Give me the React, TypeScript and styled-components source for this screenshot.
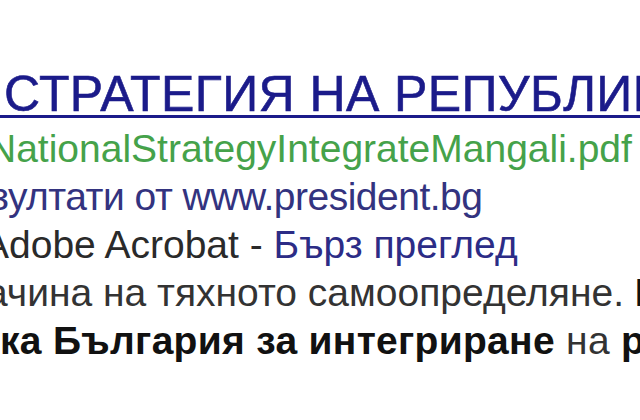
import styled, { createGlobalStyle } from "styled-components";

const GlobalStyle = createGlobalStyle`
    html, body {
        margin: 0;
        padding: 0;
        background: #ffffff;
    }
    body {
        width: 640px;
        height: 420px;
        overflow: hidden;
    }
`;

const Result = styled.div`
    width: 640px;
    height: 420px;
    overflow: hidden;
    padding-top: 67px;
    box-sizing: border-box;
    font-family: "Liberation Sans", Arial, sans-serif;
    white-space: nowrap;
`;

const Title = styled.a<{ $shift: number }>`
    display: block;
    margin-left: ${(p) => p.$shift}px;
    margin-bottom: 4px;
    font-size: 50px;
    line-height: 54px;
    letter-spacing: 0.4px;
    color: #1b1b8a;
    -webkit-text-stroke: 0.6px #1b1b8a;
    text-decoration: underline;
    text-decoration-thickness: 3px;
    text-underline-offset: 4px;
`;

const Line = styled.div<{ $shift: number; $color?: string; $spacing?: number }>`
    margin-left: ${(p) => p.$shift}px;
    font-size: 39px;
    line-height: 48px;
    letter-spacing: ${(p) => p.$spacing || 0}px;
    color: ${(p) => p.$color || "#333333"};
`;

const Link = styled.span`
    color: #2c2c86;
`;

const Bold = styled.b`
    color: #111111;
    font-weight: 700;
`;

export default function App() {
    return (
        <>
            <GlobalStyle />
            <Result>
                <Title $shift={-44}>А СТРАТЕГИЯ НА РЕПУБЛИКА БЪЛГАРИЯ</Title>
                <Line $shift={-12} $color="#45a24a">NationalStrategyIntegrateMangali.pdf</Line>
                <Line $shift={-9} $spacing={-0.5} $color="#33337f">зултати от www.president.bg</Line>
                <Line $shift={-17} $color="#2a2a2a">
                    Adobe Acrobat - <Link>Бърз преглед</Link>
                </Line>
                <Line $shift={-14}>
                    ачина на тяхното самоопределяне. <Bold>Национална</Bold>
                </Line>
                <Line $shift={0} $spacing={0.3}>
                    <Bold>ка България за интегриране</Bold> на <Bold>ромите</Bold>
                </Line>
            </Result>
        </>
    );
}
